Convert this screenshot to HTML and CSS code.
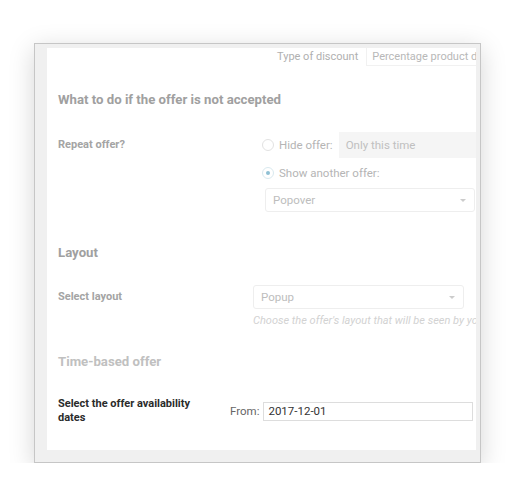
FILE: index.html
```html
<!DOCTYPE html>
<html lang="en">
<head>
<meta charset="utf-8">
<title>Offer settings</title>
<link rel="stylesheet" href="styles.css">
</head>
<body>
<div class="frame">
  <div class="panel">
    <div class="top-row">
      <span class="top-label">Type of discount</span>
      <span class="top-box">Percentage product discount</span>
    </div>

    <h2 class="heading">What to do if the offer is not accepted</h2>

    <div class="field field-repeat">
      <div class="field-label">Repeat offer?</div>
      <div class="controls">
        <div class="radio-line">
          <span class="radio"></span>
          <span class="radio-text">Hide offer:</span>
          <span class="gray-input">Only this time</span>
        </div>
        <div class="radio-line radio-line-2">
          <span class="radio radio-on"></span>
          <span class="radio-text">Show another offer:</span>
        </div>
        <div class="select select-popover">Popover<span class="caret"></span></div>
      </div>
    </div>

    <h2 class="heading heading-layout">Layout</h2>

    <div class="field field-layout">
      <div class="field-label">Select layout</div>
      <div class="controls">
        <div class="select select-popup">Popup<span class="caret"></span></div>
        <div class="help">Choose the offer's layout that will be seen by your visitors</div>
      </div>
    </div>

    <h2 class="heading heading-time">Time-based offer</h2>

    <div class="field field-dates">
      <div class="field-label dark">Select the offer availability dates</div>
      <div class="date-ctrl">
        <span class="from">From:</span>
        <span class="date-input">2017-12-01</span>
      </div>
    </div>
  </div>
</div>
</body>
</html>
```

FILE: styles.css
```css
html, body {
  margin: 0;
  padding: 0;
  background: #ffffff;
}
body {
  font-family: Roboto, "Liberation Sans", Arial, sans-serif;
  font-size: 11px;
  color: #aaaaaa;
}
.frame {
  margin: 43px 0 0 34px;
  width: 433px;
  height: 414px;
  padding: 4px 0 0 12px;
  background: #f0f0f0;
  border: 1px solid #c6c6c6;
  box-shadow: 0 6px 24px rgba(0, 0, 0, 0.17);
}
.panel {
  width: 429px;
  height: 402px;
  background: #ffffff;
  overflow: hidden;
  box-sizing: border-box;
  padding-left: 11px;
}
.top-row {
  display: flex;
  align-items: center;
  height: 19px;
  margin-top: -1px;
  padding-left: 219px;
  white-space: nowrap;
}
.top-label {
  color: #b0b0b0;
  margin-right: 8px;
}
.top-box {
  height: 19px;
  line-height: 19px;
  padding: 0 5px;
  border: 1px solid #f1f1f1;
  border-top: none;
  color: #b8b8b8;
  box-sizing: border-box;
}
.heading {
  margin: 25px 0 0;
  font-size: 13.2px;
  line-height: 18px;
  font-weight: 700;
  color: #a0a0a0;
}
.heading-layout { margin-top: 32px; }
.heading-time { margin-top: 25px; color: #c0c0c0; }
.field {
  display: flex;
  align-items: flex-start;
}
.field-label {
  font-weight: 700;
  color: #a4a4a4;
  flex: none;
}
.field-repeat { margin-top: 23px; }
.field-repeat .field-label { width: 204px; line-height: 26px; }
.controls { display: flex; flex-direction: column; }
.radio-line {
  display: flex;
  align-items: center;
  height: 26px;
  white-space: nowrap;
}
.radio-line-2 { height: 18px; margin-top: 6px; }
.radio {
  width: 12px;
  height: 12px;
  box-sizing: border-box;
  border: 1px solid #e2e2e2;
  border-radius: 50%;
  margin-right: 5px;
  flex: none;
  display: flex;
  align-items: center;
  justify-content: center;
}
.radio-on { border-color: #d9e9ef; }
.radio-on::after {
  content: "";
  width: 4px;
  height: 4px;
  border-radius: 50%;
  background: #8fc0d4;
}
.radio-text { color: #b5b5b5; font-size: 11.5px; }
.gray-input {
  margin-left: 6px;
  width: 137px;
  height: 26px;
  line-height: 26px;
  padding: 0 7px;
  box-sizing: border-box;
  background: #f5f5f5;
  color: #c0c0c0;
  font-size: 11.5px;
}
.select {
  position: relative;
  height: 24px;
  line-height: 22px;
  box-sizing: border-box;
  border: 1px solid #eeeeee;
  border-radius: 3px;
  padding: 0 7px;
  color: #bdbdbd;
  font-size: 11.5px;
  background: #ffffff;
}
.select-popover { margin: 6px 0 0 3px; width: 210px; }
.caret {
  position: absolute;
  right: 8px;
  top: 10px;
  width: 0;
  height: 0;
  border-left: 3px solid transparent;
  border-right: 3px solid transparent;
  border-top: 3px solid #cccccc;
}
.field-layout { margin-top: 23px; }
.field-layout .field-label { width: 195px; line-height: 24px; }
.select-popup { width: 211px; }
.help {
  margin-top: 5px;
  line-height: 14px;
  font-style: italic;
  color: #d2d2d2;
  white-space: nowrap;
}
.field-dates {
  margin-top: 26px;
  align-items: center;
}
.field-dates .field-label {
  width: 140px;
  margin-right: 32px;
  line-height: 14px;
}
.dark { color: #2b2b2b; }
.date-ctrl {
  display: flex;
  align-items: center;
}
.from {
  color: #666666;
  font-size: 11.5px;
  margin-right: 4px;
}
.date-input {
  width: 210px;
  height: 19px;
  line-height: 17px;
  box-sizing: border-box;
  border: 1px solid #dddddd;
  padding: 0 4px;
  color: #333333;
  font-size: 11.5px;
}
```
